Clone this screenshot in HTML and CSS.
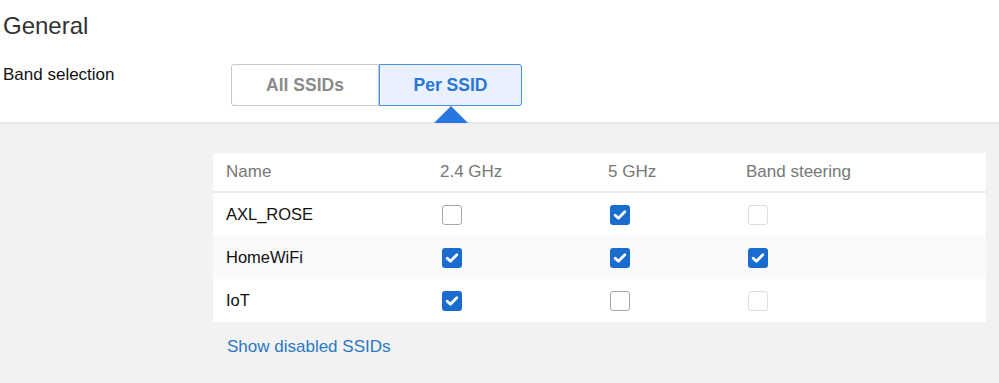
FILE: index.html
```html
<!DOCTYPE html>
<html>
<head>
<meta charset="utf-8">
<link rel="stylesheet" href="styles.css">
</head>
<body>
<div class="top">
  <h1 class="title">General</h1>
  <div class="band-row">
    <div class="band-label">Band selection</div>
    <div class="seg">
      <button class="seg-btn">All SSIDs</button>
      <button class="seg-btn active">Per SSID</button>
    </div>
  </div>
</div>
<div class="bottom">
  <div class="table">
    <div class="row head">
      <div>Name</div><div>2.4 GHz</div><div>5 GHz</div><div>Band steering</div>
    </div>
    <div class="row">
      <div>AXL_ROSE</div>
      <div><span class="cb"></span></div>
      <div><span class="cb on"></span></div>
      <div><span class="cb dis"></span></div>
    </div>
    <div class="row alt">
      <div>HomeWiFi</div>
      <div><span class="cb on"></span></div>
      <div><span class="cb on"></span></div>
      <div><span class="cb on"></span></div>
    </div>
    <div class="row">
      <div>IoT</div>
      <div><span class="cb on"></span></div>
      <div><span class="cb"></span></div>
      <div><span class="cb dis"></span></div>
    </div>
  </div>
  <a class="link" href="#">Show disabled SSIDs</a>
</div>
</body>
</html>
```
FILE: styles.css
```css
html, body { margin: 0; padding: 0; }
body {
  font-family: "Liberation Sans", Arial, sans-serif;
  background: #f2f2f2;
  width: 999px;
  height: 383px;
  overflow: hidden;
}
.top {
  background: #fff;
  height: 123px;
  padding-left: 3px;
  box-sizing: border-box;
  border-bottom: 1px solid #e4e4e4;
  box-shadow: 0 1px 2px rgba(0,0,0,0.05);
  position: relative;
  z-index: 1;
}
.title {
  margin: 0;
  padding-top: 12px;
  font-size: 24px;
  font-weight: normal;
  color: #333;
  line-height: 28px;
}
.band-row {
  display: flex;
  align-items: flex-start;
  margin-top: 25px;
}
.band-label {
  font-size: 17px;
  color: #111;
  width: 228px;
  line-height: 20px;
}
.seg {
  display: flex;
  margin-top: -1px;
}
.seg-btn {
  font-family: "Liberation Sans", Arial, sans-serif;
  font-size: 17.5px;
  font-weight: bold;
  height: 42px;
  background: #fff;
  color: #8a8a8a;
  border: 1px solid #c8c8c8;
  border-radius: 3px 0 0 3px;
  width: 148px;
  padding: 0;
  position: relative;
}
.seg-btn.active {
  width: 143px;
  background: #e8f1fd;
  color: #2a76d6;
  border-color: #4a8fe3;
  border-radius: 0 3px 3px 0;
}
.seg-btn.active::after {
  content: "";
  position: absolute;
  left: 50%;
  top: 100%;
  margin-left: -17px;
  margin-top: 1px;
  border-left: 17px solid transparent;
  border-right: 17px solid transparent;
  border-bottom: 17px solid #2a76e0;
}
.bottom {
  padding: 30px 13px 0 213px;
}
.table {
  background: #fff;
  width: 773px;
}
.row {
  display: grid;
  grid-template-columns: 214px 168px 138px 1fr;
  padding-left: 13px;
  height: 43px;
  align-items: center;
  font-size: 16.5px;
  color: #111;
}
.row.head {
  height: 38px;
  border-bottom: 2px solid #ececec;
  color: #777;
  font-size: 17px;
}
.row.alt { background: #fafafa; }
.cb {
  display: block;
  width: 20px;
  height: 20px;
  box-sizing: border-box;
  border: 1px solid #a8a8a8;
  border-radius: 3px;
  background: #fff;
  margin-left: 2px;
}
.cb.dis { border-color: #dedede; }
.cb.on {
  border: none;
  background: #1a6dce url("data:image/svg+xml;utf8,<svg xmlns='http://www.w3.org/2000/svg' width='20' height='20' viewBox='0 0 20 20'><path d='M5.2 10.2 L8.4 13.2 L14.8 6.8' fill='none' stroke='white' stroke-width='2.8' stroke-linecap='round' stroke-linejoin='round'/></svg>") no-repeat center;
}
.link {
  display: inline-block;
  margin-top: 15px;
  margin-left: 14px;
  font-size: 17px;
  color: #2b78c2;
  text-decoration: none;
}
```
